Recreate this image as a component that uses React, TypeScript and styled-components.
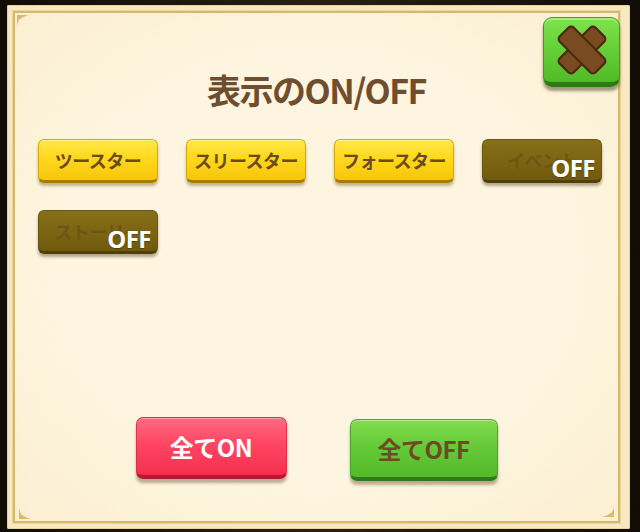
import React from 'react';
import styled, { createGlobalStyle, css } from 'styled-components';

const GlobalStyle = createGlobalStyle`
  html, body {
    margin: 0;
    padding: 0;
    background: #1d140b;
  }
  body {
    font-family: "Noto Sans CJK JP", "Noto Sans", sans-serif;
  }
`;

const Screen = styled.div`
  width: 640px;
  height: 532px;
  box-sizing: border-box;
  padding: 5px 10px 3px 7px;
  background: linear-gradient(90deg, #120c06 0%, #2a1f12 50%, #120c06 100%);
  overflow: hidden;
`;

const Panel = styled.div`
  position: relative;
  height: 100%;
  box-sizing: border-box;
  padding: 6px 10px 6px 6px;
  background: #f7e8c2;
  border-radius: 2px;
  box-shadow: inset 0 0 0 1px #e8d39e;
`;

const Inner = styled.div`
  height: 100%;
  box-sizing: border-box;
  display: flex;
  flex-direction: column;
  align-items: center;
  padding: 56px 0 40px;
  background: radial-gradient(ellipse at center, #fdf5df 60%, #fbefd2 100%);
  border: 2px solid #d8b96c;
  outline: 1px solid #ead59c;
`;

const Title = styled.h1`
  margin: 0;
  height: 42px;
  line-height: 42px;
  font-size: 34px;
  font-weight: 700;
  letter-spacing: -1.5px;
  color: #6f4e30;
`;

const ToggleGrid = styled.div`
  align-self: flex-start;
  margin: 28px 0 0 23px;
  display: grid;
  grid-template-columns: repeat(4, 120px);
  column-gap: 28px;
  row-gap: 27px;
`;

const Toggle = styled.div<{ $off?: boolean }>`
  position: relative;
  height: 44px;
  box-sizing: border-box;
  border-radius: 6px;
  display: flex;
  align-items: center;
  justify-content: center;
  font-size: 18px;
  font-weight: 700;
  letter-spacing: -0.5px;
  ${({ $off }) =>
    $off
      ? css`
          background: linear-gradient(180deg, #86701a 0%, #7a6311 60%, #705a0d 100%);
          border: 1px solid #6a560f;
          border-bottom: 3px solid #4f3f08;
          color: #6d5614;
          box-shadow: 0 3px 3px rgba(90, 70, 40, 0.45);
        `
      : css`
          background: linear-gradient(180deg, #ffe84a 0%, #ffd81c 45%, #f7c60a 100%);
          border: 1px solid #d8a90a;
          border-bottom: 3px solid #a77a06;
          color: #6c4a1c;
          box-shadow: 0 3px 3px rgba(120, 95, 50, 0.45), inset 0 1px 0 #fff38a;
        `}
`;

const OffBadge = styled.span`
  position: absolute;
  right: 6px;
  bottom: -4px;
  font-family: "Noto Sans", sans-serif;
  font-size: 24px;
  font-weight: 700;
  letter-spacing: -0.5px;
  color: #ffffff;
  text-shadow: 0 1px 1px rgba(60, 40, 0, 0.5);
`;

const Footer = styled.div`
  margin-top: auto;
  display: flex;
  gap: 63px;
  align-items: flex-start;
`;

const BigButton = styled.button<{ $tone: 'red' | 'green' }>`
  width: 151px;
  height: 62px;
  box-sizing: border-box;
  border-radius: 7px;
  font-family: "Noto Sans CJK JP", "Noto Sans", sans-serif;
  font-size: 24px;
  font-weight: 700;
  letter-spacing: -0.5px;
  cursor: pointer;
  ${({ $tone }) =>
    $tone === 'red'
      ? css`
          background: linear-gradient(180deg, #ff6a84 0%, #ff4663 45%, #f2304e 100%);
          border: 1px solid #e0304c;
          border-bottom: 4px solid #b01a33;
          color: #fff;
          box-shadow: 0 4px 3px rgba(110, 80, 50, 0.45), inset 0 1px 0 #ff9aac;
        `
      : css`
          margin-top: 2px;
          width: 148px;
          background: linear-gradient(180deg, #82dc4e 0%, #66cb38 45%, #52b92a 100%);
          border: 1px solid #4aa626;
          border-bottom: 4px solid #2f7a17;
          color: #6b4b24;
          box-shadow: 0 4px 3px rgba(110, 80, 50, 0.45), inset 0 1px 0 #b2f08a;
        `}
`;

const CloseButton = styled.button`
  position: absolute;
  top: 12px;
  left: 536px;
  width: 77px;
  height: 70px;
  box-sizing: border-box;
  padding: 0;
  border-radius: 9px;
  display: flex;
  align-items: center;
  justify-content: center;
  background: linear-gradient(180deg, #7fe24c 0%, #64cf36 50%, #50bb28 100%);
  border: 1px solid #3f9c1e;
  border-bottom: 5px solid #2c7a12;
  box-shadow: 0 4px 3px rgba(80, 60, 30, 0.5), inset 0 2px 0 #a6ee7c;
  cursor: pointer;
`;

const Corner = styled.svg<{ $pos: 'tl' | 'bl' | 'br' }>`
  position: absolute;
  width: 12px;
  height: 12px;
  ${({ $pos }) =>
    $pos === 'tl'
      ? css`top: 10px; left: 10px;`
      : $pos === 'bl'
      ? css`bottom: 10px; left: 12px; transform: scaleY(-1);`
      : css`bottom: 12px; right: 16px; transform: scale(-1, -1);`}
`;

const CornerMark: React.FC<{ pos: 'tl' | 'bl' | 'br' }> = ({ pos }) => (
  <Corner $pos={pos} viewBox="0 0 12 12">
    <path d="M0 0 L12 0 Q5 2 2 5 Q0 8 0 12 Z" fill="#d9bb6e" />
  </Corner>
);

const CloseIcon = () => (
  <svg width="44" height="44" viewBox="0 0 40 40" style={{ overflow: 'visible' }}>
    <g transform="rotate(45 20 20)">
      <rect x="11" y="-3" width="18" height="46" rx="3.5" fill="#7a4a20" stroke="#4a290d" strokeWidth="2" />
      <rect x="-3" y="11" width="46" height="18" rx="3.5" fill="#7a4a20" stroke="#4a290d" strokeWidth="2" />
      <rect x="12" y="12" width="16" height="16" fill="#7a4a20" />
    </g>
  </svg>
);

const toggles = [
  { label: 'ツースター', off: false },
  { label: 'スリースター', off: false },
  { label: 'フォースター', off: false },
  { label: 'イベント', off: true },
  { label: 'ストーリー', off: true },
];

export default function App() {
  return (
    <>
      <GlobalStyle />
      <Screen>
        <Panel>
          <Inner>
            <Title>表示のON/OFF</Title>
            <ToggleGrid>
              {toggles.map((t) => (
                <Toggle key={t.label} $off={t.off}>
                  {t.label}
                  {t.off && <OffBadge>OFF</OffBadge>}
                </Toggle>
              ))}
            </ToggleGrid>
            <Footer>
              <BigButton $tone="red">全てON</BigButton>
              <BigButton $tone="green">全てOFF</BigButton>
            </Footer>
          </Inner>
          <CornerMark pos="tl" />
          <CornerMark pos="bl" />
          <CornerMark pos="br" />
          <CloseButton aria-label="閉じる">
            <CloseIcon />
          </CloseButton>
        </Panel>
      </Screen>
    </>
  );
}
